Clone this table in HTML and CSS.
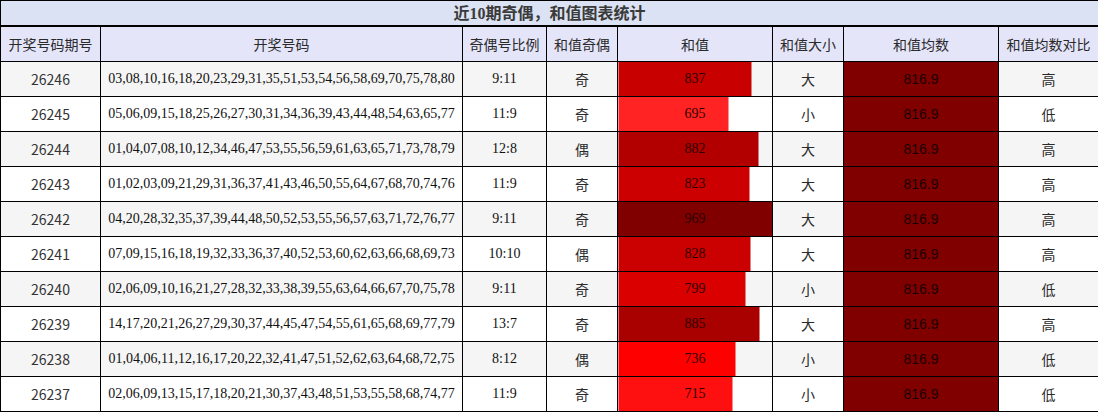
FILE: index.html
```html
<!DOCTYPE html>
<html lang="zh">
<head>
<meta charset="utf-8">
<title>近10期奇偶，和值图表统计</title>
<link rel="stylesheet" href="styles.css">
</head>
<body>
<table class="stats">
  <colgroup>
    <col class="c-issue"><col class="c-nums"><col class="c-ratio"><col class="c-oe">
    <col class="c-sum"><col class="c-size"><col class="c-avg"><col class="c-cmp">
  </colgroup>
  <thead>
    <tr class="title-row"><th colspan="8" class="title"><span class="cjk">近</span><span class="serif">10</span><span class="cjk">期奇偶，和值图表统计</span></th></tr>
    <tr class="head-row">
      <th>开奖号码期号</th><th>开奖号码</th><th>奇偶号比例</th><th>和值奇偶</th>
      <th>和值</th><th>和值大小</th><th>和值均数</th><th>和值均数对比</th>
    </tr>
  </thead>
  <tbody>
    <tr><td class="issue">26246</td><td class="nums">03,08,10,16,18,20,23,29,31,35,51,53,54,56,58,69,70,75,78,80</td><td class="ratio">9:11</td><td class="zh">奇</td><td class="sum" style="--w:86.38%;--c:#c80000">837</td><td class="zh">大</td><td class="avg">816.9</td><td class="zh">高</td></tr>
    <tr><td class="issue">26245</td><td class="nums">05,06,09,15,18,25,26,27,30,31,34,36,39,43,44,48,54,63,65,77</td><td class="ratio">11:9</td><td class="zh">奇</td><td class="sum" style="--w:71.72%;--c:#ff2323">695</td><td class="zh">小</td><td class="avg">816.9</td><td class="zh">低</td></tr>
    <tr><td class="issue">26244</td><td class="nums">01,04,07,08,10,12,34,46,47,53,55,56,59,61,63,65,71,73,78,79</td><td class="ratio">12:8</td><td class="zh">偶</td><td class="sum" style="--w:91.02%;--c:#b20000">882</td><td class="zh">大</td><td class="avg">816.9</td><td class="zh">高</td></tr>
    <tr><td class="issue">26243</td><td class="nums">01,02,03,09,21,29,31,36,37,41,43,46,50,55,64,67,68,70,74,76</td><td class="ratio">11:9</td><td class="zh">奇</td><td class="sum" style="--w:84.93%;--c:#cc0000">823</td><td class="zh">大</td><td class="avg">816.9</td><td class="zh">高</td></tr>
    <tr><td class="issue">26242</td><td class="nums">04,20,28,32,35,37,39,44,48,50,52,53,55,56,57,63,71,72,76,77</td><td class="ratio">9:11</td><td class="zh">奇</td><td class="sum" style="--w:100%;--c:#800000">969</td><td class="zh">大</td><td class="avg">816.9</td><td class="zh">高</td></tr>
    <tr><td class="issue">26241</td><td class="nums">07,09,15,16,18,19,32,33,36,37,40,52,53,60,62,63,66,68,69,73</td><td class="ratio">10:10</td><td class="zh">偶</td><td class="sum" style="--w:85.45%;--c:#cb0000">828</td><td class="zh">大</td><td class="avg">816.9</td><td class="zh">高</td></tr>
    <tr><td class="issue">26240</td><td class="nums">02,06,09,10,16,21,27,28,32,33,38,39,55,63,64,66,67,70,75,78</td><td class="ratio">9:11</td><td class="zh">奇</td><td class="sum" style="--w:82.46%;--c:#db0000">799</td><td class="zh">小</td><td class="avg">816.9</td><td class="zh">低</td></tr>
    <tr><td class="issue">26239</td><td class="nums">14,17,20,21,26,27,29,30,37,44,45,47,54,55,61,65,68,69,77,79</td><td class="ratio">13:7</td><td class="zh">奇</td><td class="sum" style="--w:91.33%;--c:#a90000">885</td><td class="zh">大</td><td class="avg">816.9</td><td class="zh">高</td></tr>
    <tr><td class="issue">26238</td><td class="nums">01,04,06,11,12,16,17,20,22,32,41,47,51,52,62,63,64,68,72,75</td><td class="ratio">8:12</td><td class="zh">偶</td><td class="sum" style="--w:75.95%;--c:#ff0000">736</td><td class="zh">小</td><td class="avg">816.9</td><td class="zh">低</td></tr>
    <tr><td class="issue">26237</td><td class="nums">02,06,09,13,15,17,18,20,21,30,37,43,48,51,53,55,58,68,74,77</td><td class="ratio">11:9</td><td class="zh">奇</td><td class="sum" style="--w:73.79%;--c:#ff1010">715</td><td class="zh">小</td><td class="avg">816.9</td><td class="zh">低</td></tr>
  </tbody>
</table>
</body>
</html>
```

FILE: styles.css
```css
html, body {
  margin: 0;
  padding: 0;
  background: #ffffff;
}

.stats {
  width: 1098px;
  border-collapse: collapse;
  table-layout: fixed;
  font-family: "Noto Sans CJK SC", "Noto Sans", sans-serif;
  color: #222;
}

.c-issue { width: 100px; }
.c-nums  { width: 362px; }
.c-ratio { width: 84px; }
.c-oe    { width: 71px; }
.c-sum   { width: 155px; }
.c-size  { width: 71px; }
.c-avg   { width: 155px; }
.c-cmp   { width: 100px; }

.stats th,
.stats td {
  border: 1px solid #000;
  padding: 0;
  text-align: center;
  vertical-align: middle;
  white-space: nowrap;
  overflow: hidden;
}

.title-row th {
  height: 23px;
  background: #dbe2f3;
  border-bottom: 2px solid #000;
  font-size: 16px;
  font-weight: bold;
  color: #3a3a3a;
  line-height: 23px;
}

.title .serif {
  font-family: "Liberation Serif", serif;
  font-weight: bold;
}

.head-row th {
  height: 34px;
  background: #e5e5fa;
  font-size: 14px;
  font-weight: normal;
  color: #2a2a2a;
}

.stats tbody td {
  height: 34px;
  font-size: 14px;
}

.stats tbody tr:nth-child(odd) {
  background: #f5f5f5;
}

.stats tbody tr:nth-child(even) {
  background: #ffffff;
}

.issue {
  font-family: "Noto Sans CJK SC", "Noto Sans", sans-serif;
  font-size: 13px;
  color: #333;
}

.nums,
.ratio {
  font-family: "Liberation Serif", serif;
  font-size: 14px;
  color: #111;
}

.zh {
  font-size: 15px;
  color: #2a2a2a;
}

.sum {
  font-family: "Liberation Serif", serif;
  color: #2a0000;
  background: linear-gradient(to right, var(--c) var(--w), transparent var(--w));
}

.avg {
  background: #800000;
  font-family: "Liberation Sans Narrow", "Liberation Sans", sans-serif;
  font-size: 16px;
  color: #1a0000;
}
```
